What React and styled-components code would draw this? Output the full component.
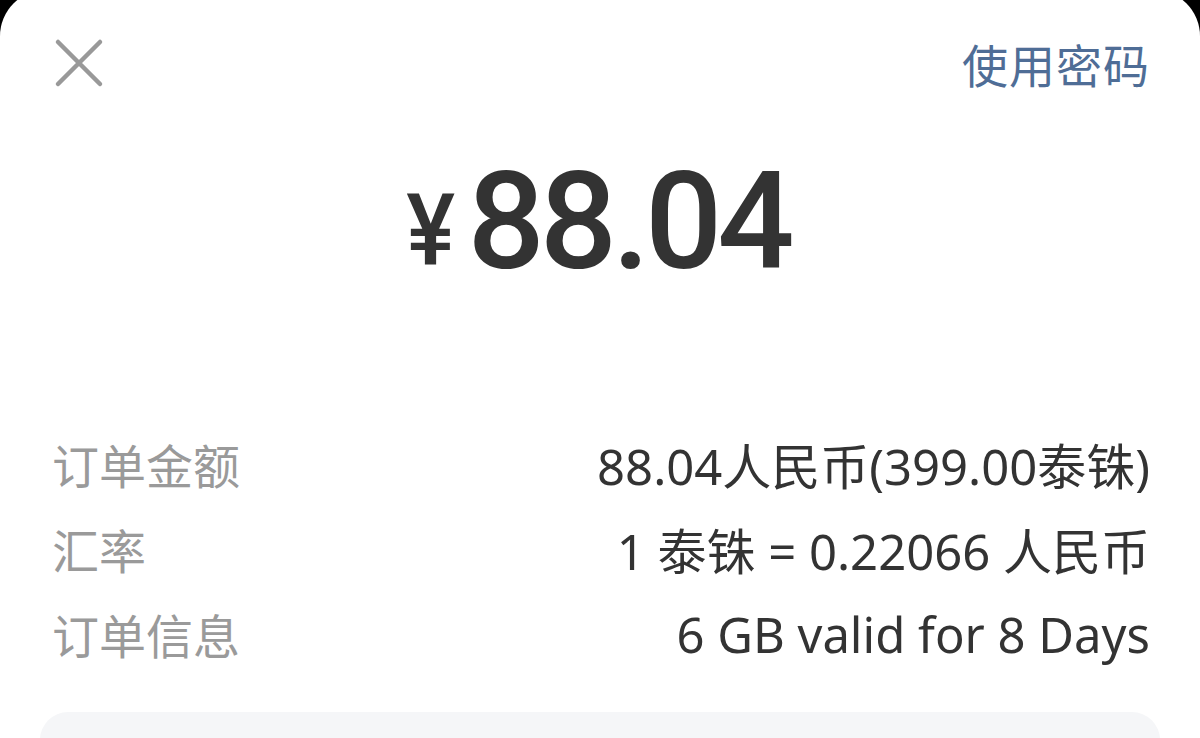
import styled, { createGlobalStyle } from 'styled-components';

const GlobalStyle = createGlobalStyle`
    html, body {
        margin: 0;
        padding: 0;
        background: #000000;
        overflow: hidden;
    }
    body {
        font-family: 'Noto Sans', 'Noto Sans CJK SC', sans-serif;
    }
`;

const Sheet = styled.div`
    margin-top: -10px;
    height: 748px;
    overflow: hidden;
    background: #ffffff;
    border-radius: 46px 46px 0 0;
    padding: 0 50px 0 40px;
    box-sizing: border-box;
    display: flex;
    flex-direction: column;
`;

const Header = styled.div`
    display: flex;
    justify-content: space-between;
    align-items: center;
    height: 70px;
    margin-top: 40px;
    padding-left: 14px;
`;

const CloseButton = styled.button`
    width: 50px;
    height: 50px;
    padding: 0;
    border: none;
    background: none;
    display: flex;
    align-items: center;
    justify-content: center;
`;

const PasswordLink = styled.span`
    font-family: 'Noto Sans CJK SC', sans-serif;
    font-size: 46px;
    color: #4f6d96;
    letter-spacing: 1px;
`;

const Amount = styled.div`
    display: flex;
    justify-content: center;
    align-items: baseline;
    margin-top: 58px;
    padding-left: 4px;
    color: #333333;
    font-family: 'Roboto', 'Liberation Sans', sans-serif;
    font-weight: 500;
    line-height: 1;
`;

const Currency = styled.span`
    font-size: 100px;
    margin-right: 10px;
    transform: translateY(-3px) scaleX(0.92);
`;

const Figure = styled.span`
    font-size: 136px;
    letter-spacing: -5px;
`;

const Details = styled.div`
    display: flex;
    flex-direction: column;
    margin-top: 131px;
    padding-left: 12px;
`;

const Row = styled.div`
    display: flex;
    justify-content: space-between;
    align-items: center;
    height: 85px;
`;

const Label = styled.span`
    font-family: 'Noto Sans CJK SC', sans-serif;
    font-size: 47px;
    color: #9a9a9a;
`;

const Value = styled.span`
    font-family: 'Noto Sans', 'Noto Sans CJK SC', sans-serif;
    font-size: 49px;
    color: #333333;
`;

const InfoBox = styled.div`
    margin-top: 36px;
    margin-right: -10px;
    height: 120px;
    flex-shrink: 0;
    background: #f5f6f8;
    border-radius: 28px 28px 0 0;
`;

const CloseIcon = () => (
    <svg width="50" height="50" viewBox="0 0 50 50">
        <path d="M4 4 L46 46 M46 4 L4 46" stroke="#999999" strokeWidth="4.5" strokeLinecap="round" />
    </svg>
);

const rows = [
    { label: '订单金额', value: '88.04人民币(399.00泰铢)' },
    { label: '汇率', value: '1 泰铢 = 0.22066 人民币' },
    { label: '订单信息', value: '6 GB valid for 8 Days' },
];

const App = () => {
    return (
        <>
            <GlobalStyle />
            <Sheet>
                <Header>
                    <CloseButton>
                        <CloseIcon />
                    </CloseButton>
                    <PasswordLink>使用密码</PasswordLink>
                </Header>
                <Amount>
                    <Currency>¥</Currency>
                    <Figure>88.04</Figure>
                </Amount>
                <Details>
                    {rows.map((row) => (
                        <Row key={row.label}>
                            <Label>{row.label}</Label>
                            <Value>{row.value}</Value>
                        </Row>
                    ))}
                </Details>
                <InfoBox />
            </Sheet>
        </>
    );
};

export default App;
